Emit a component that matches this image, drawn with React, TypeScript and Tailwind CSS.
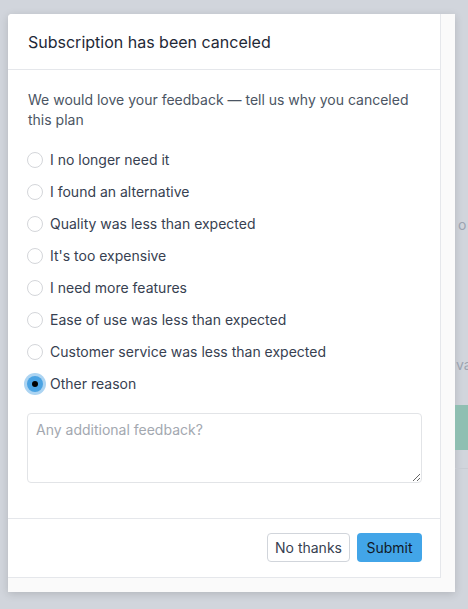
import { useState } from 'react';

const reasons = [
  "I no longer need it",
  "I found an alternative",
  "Quality was less than expected",
  "It's too expensive",
  "I need more features",
  "Ease of use was less than expected",
  "Customer service was less than expected",
  "Other reason",
];

export default function App() {
  const [selected, setSelected] = useState("Other reason");

  return (
    <div className="min-h-[609px] bg-[#d1d5dc] flex pt-[14px] pl-2 font-['Inter',sans-serif] overflow-hidden">
      {/* Modal */}
      <div className="w-[447px] h-[578px] flex-shrink-0 bg-[#fafafa] rounded-tl-[4px] shadow-[0_2px_8px_rgba(0,0,0,0.15)]">
        <div className="w-[433px] h-[564px] bg-white rounded-tl-[4px] border-r border-b border-[#e5e7eb] flex flex-col">
          <div className="h-[56px] px-5 flex items-center border-b border-[#e5e7eb] flex-shrink-0">
            <h2 className="text-base text-[#1f2937]">Subscription has been canceled</h2>
          </div>

          <div className="flex-1 px-[19px] pt-5">
            <p className="text-sm leading-5 text-[#4b5563] pl-px">
              We would love your feedback — tell us why you canceled this plan
            </p>

            <div className="mt-[14px] flex flex-col">
              {reasons.map((r) => (
                <label
                  key={r}
                  onClick={() => setSelected(r)}
                  className="h-8 flex items-center gap-[7px] cursor-pointer"
                >
                  {selected === r ? (
                    <span className="w-4 h-4 rounded-full bg-[#4aa3e3] ring-[3px] ring-[#acd4f2] flex items-center justify-center">
                      <span className="w-[6px] h-[6px] rounded-full bg-black"></span>
                    </span>
                  ) : (
                    <span className="w-4 h-4 rounded-full border border-[#d4d6da] bg-white"></span>
                  )}
                  <span className="text-sm text-[#374151]">{r}</span>
                </label>
              ))}
            </div>

            <textarea
              placeholder="Any additional feedback?"
              className="mt-[13px] w-[395px] h-[70px] block border border-[#e2e4e7] rounded-[4px] px-2 py-[6px] text-sm text-[#374151] placeholder:text-[#a3a8b0] outline-none resize-y"
            />
          </div>

          <div className="h-[59px] flex-shrink-0 border-t border-[#e5e7eb] flex items-start justify-end gap-[7px] pt-[14px] pr-[18px]">
            <button className="h-[29px] w-[83px] rounded-[4px] border border-[#d1d5db] bg-white text-sm text-[#374151]">
              No thanks
            </button>
            <button className="h-[29px] w-[65px] rounded-[4px] bg-[#42a5e8] text-sm text-[#111827]">
              Submit
            </button>
          </div>
        </div>
      </div>

      {/* Background page peeking out */}
      <div className="flex-1 flex flex-col pl-[3px] text-sm text-[#9ca3af] whitespace-nowrap">
        <div className="mt-[201px] h-5 leading-5">o</div>
        <div className="mt-[120px] h-5 leading-5 -ml-[2px]">vac</div>
        <div className="mt-[30px] h-[45px] bg-[#8fbfb2] -ml-[3px]"></div>
        <div className="mt-[18px] h-px bg-[#c8ccd3] -ml-[3px]"></div>
      </div>
    </div>
  );
}
